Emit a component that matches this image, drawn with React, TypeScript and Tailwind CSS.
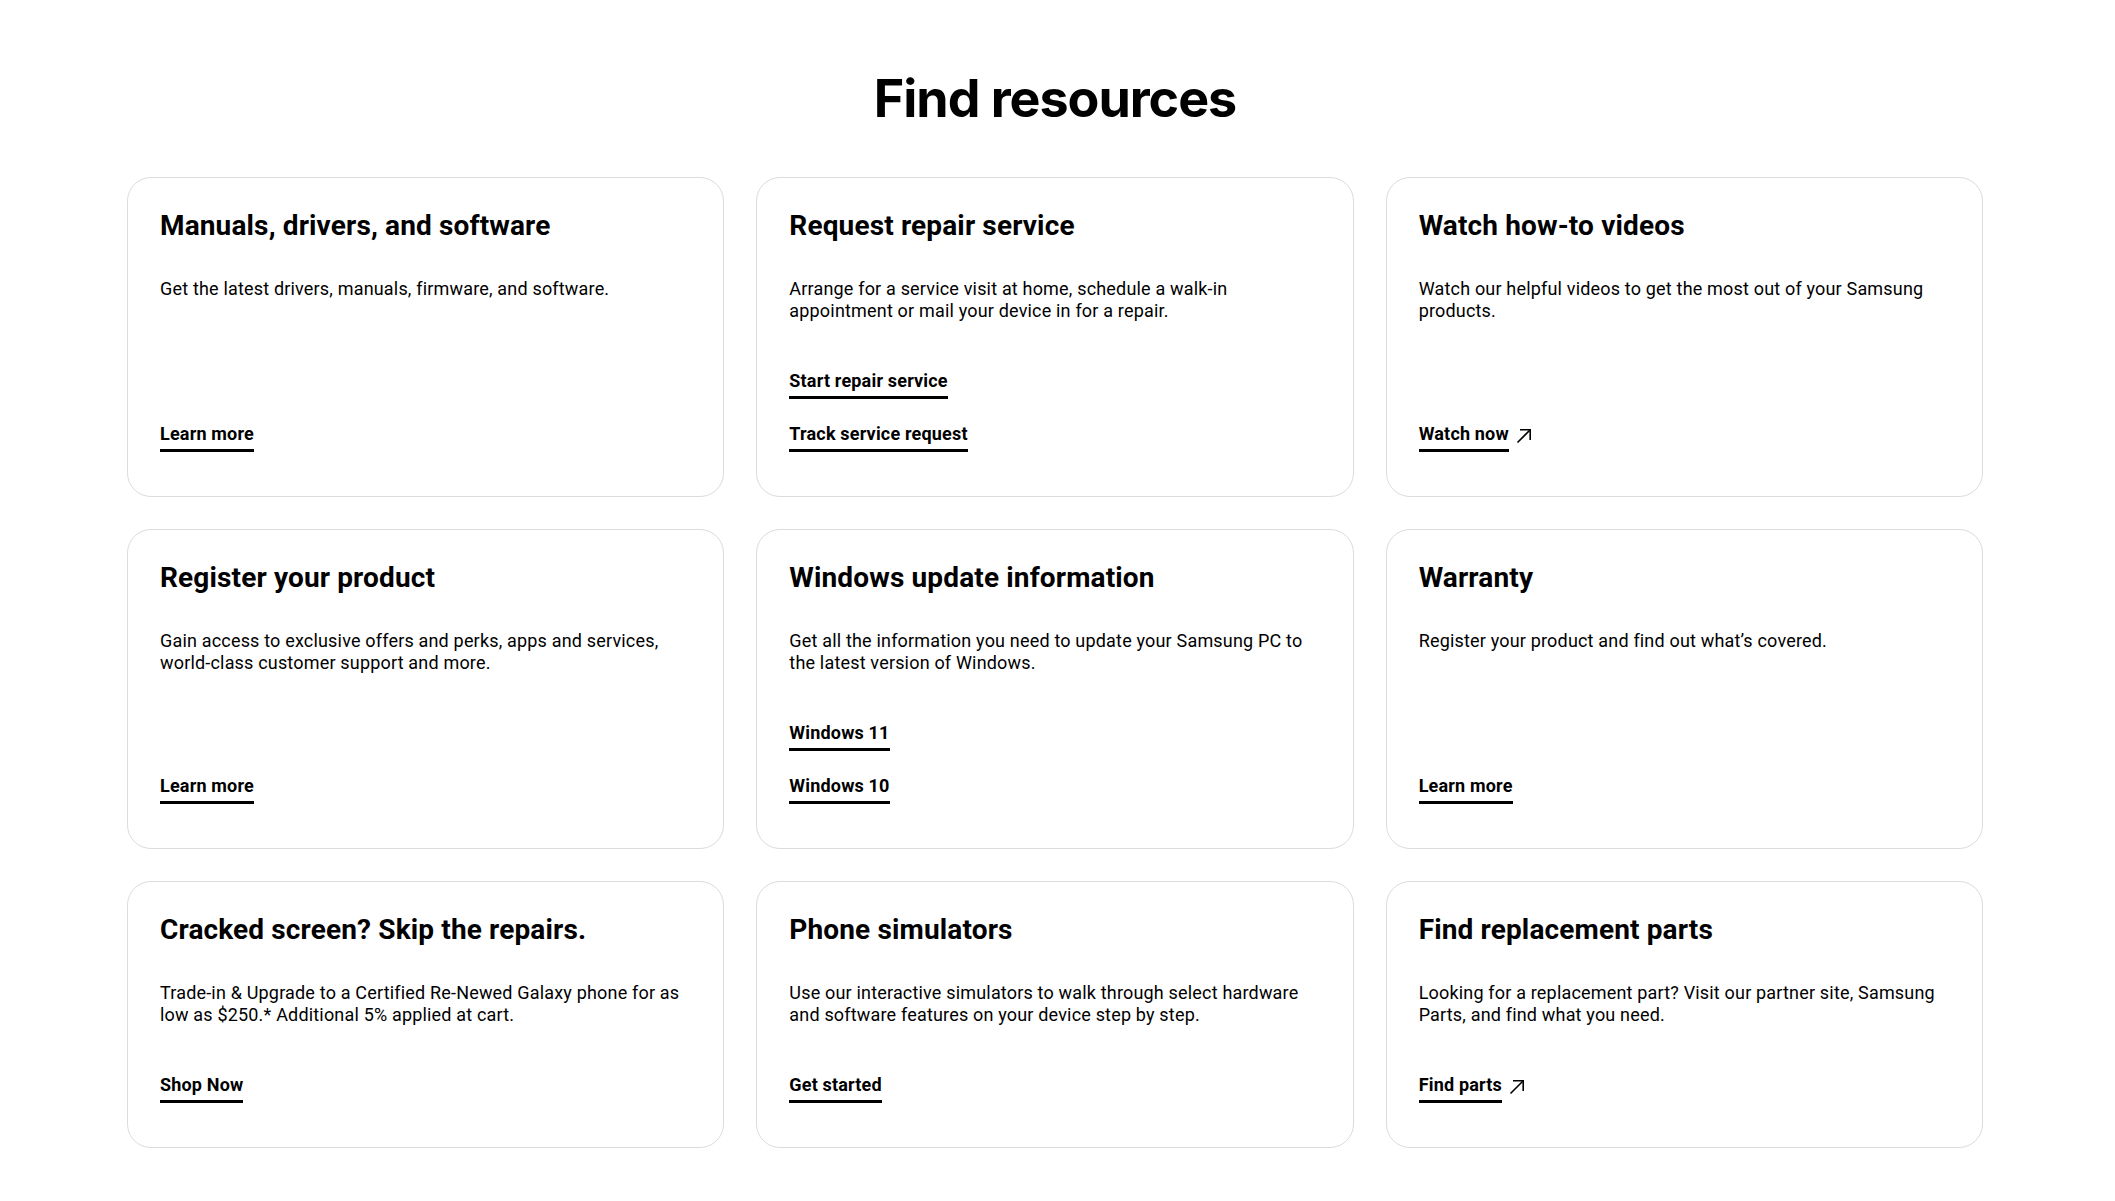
import React from "react";

type LinkItem = { label: string; external?: boolean };

type Resource = {
  title: string;
  body: string[];
  links: LinkItem[];
};

// body lines are split the way the design wraps them
const resources: Resource[] = [
  {
    title: "Manuals, drivers, and software",
    body: ["Get the latest drivers, manuals, firmware, and software."],
    links: [{ label: "Learn more" }],
  },
  {
    title: "Request repair service",
    body: ["Arrange for a service visit at home, schedule a walk-in", "appointment or mail your device in for a repair."],
    links: [{ label: "Start repair service" }, { label: "Track service request" }],
  },
  {
    title: "Watch how-to videos",
    body: ["Watch our helpful videos to get the most out of your Samsung", "products."],
    links: [{ label: "Watch now", external: true }],
  },
  {
    title: "Register your product",
    body: ["Gain access to exclusive offers and perks, apps and services,", "world-class customer support and more."],
    links: [{ label: "Learn more" }],
  },
  {
    title: "Windows update information",
    body: ["Get all the information you need to update your Samsung PC to", "the latest version of Windows."],
    links: [{ label: "Windows 11" }, { label: "Windows 10" }],
  },
  {
    title: "Warranty",
    body: ["Register your product and find out what\u2019s covered."],
    links: [{ label: "Learn more" }],
  },
  {
    title: "Cracked screen? Skip the repairs.",
    body: ["Trade-in & Upgrade to a Certified Re-Newed Galaxy phone for as", "low as $250.* Additional 5% applied at cart."],
    links: [{ label: "Shop Now" }],
  },
  {
    title: "Phone simulators",
    body: ["Use our interactive simulators to walk through select hardware", "and software features on your device step by step."],
    links: [{ label: "Get started" }],
  },
  {
    title: "Find replacement parts",
    body: ["Looking for a replacement part? Visit our partner site, Samsung", "Parts, and find what you need."],
    links: [{ label: "Find parts", external: true }],
  },
];

function ArrowOut() {
  return (
    <svg width="16" height="16" viewBox="0 0 16 16" fill="none" stroke="#000" strokeWidth="1.6" className="ml-[7px] mt-[6px] shrink-0">
      <path d="M1.5 14.5 14 2" />
      <path d="M4 1.8h10.2V12" />
    </svg>
  );
}

function ResourceCard({ item }: { item: Resource }) {
  return (
    <div className="flex flex-col rounded-[24px] border border-[#dcdcdc] bg-white px-8 pt-[30px] pb-[44px]">
      <h3 className="text-[28px] leading-[36px] font-bold tracking-[0.005em] text-black">{item.title}</h3>
      <p className="mt-[34px] text-[18px] leading-[22px] tracking-[0.01em] whitespace-nowrap text-black">
        {item.body.map((line, i) => (
          <React.Fragment key={i}>
            {i > 0 && <br />}
            {line}
          </React.Fragment>
        ))}
      </p>
      <div className="mt-auto flex flex-col items-start gap-[23px] pt-[47px]">
        {item.links.map((l) => (
          <a key={l.label} href="#" className="flex items-start">
            <span className="border-b-[3px] border-black pb-[3px] text-[18px] leading-[24px] font-bold tracking-[0.01em] text-black">
              {l.label}
            </span>
            {l.external && <ArrowOut />}
          </a>
        ))}
      </div>
    </div>
  );
}

export default function App() {
  return (
    <div className="min-h-screen w-full bg-white pb-12 font-['Roboto',sans-serif]">
      <div className="ml-[127px] w-[1856px]">
        <h2 className="pt-[67px] text-center font-['Inter',sans-serif] text-[52px] leading-[64px] font-bold tracking-[-0.02em] text-black">
          Find resources
        </h2>
        <div className="mt-[46px] grid grid-cols-3 gap-8">
          {resources.map((r) => (
            <ResourceCard key={r.title} item={r} />
          ))}
        </div>
      </div>
    </div>
  );
}
